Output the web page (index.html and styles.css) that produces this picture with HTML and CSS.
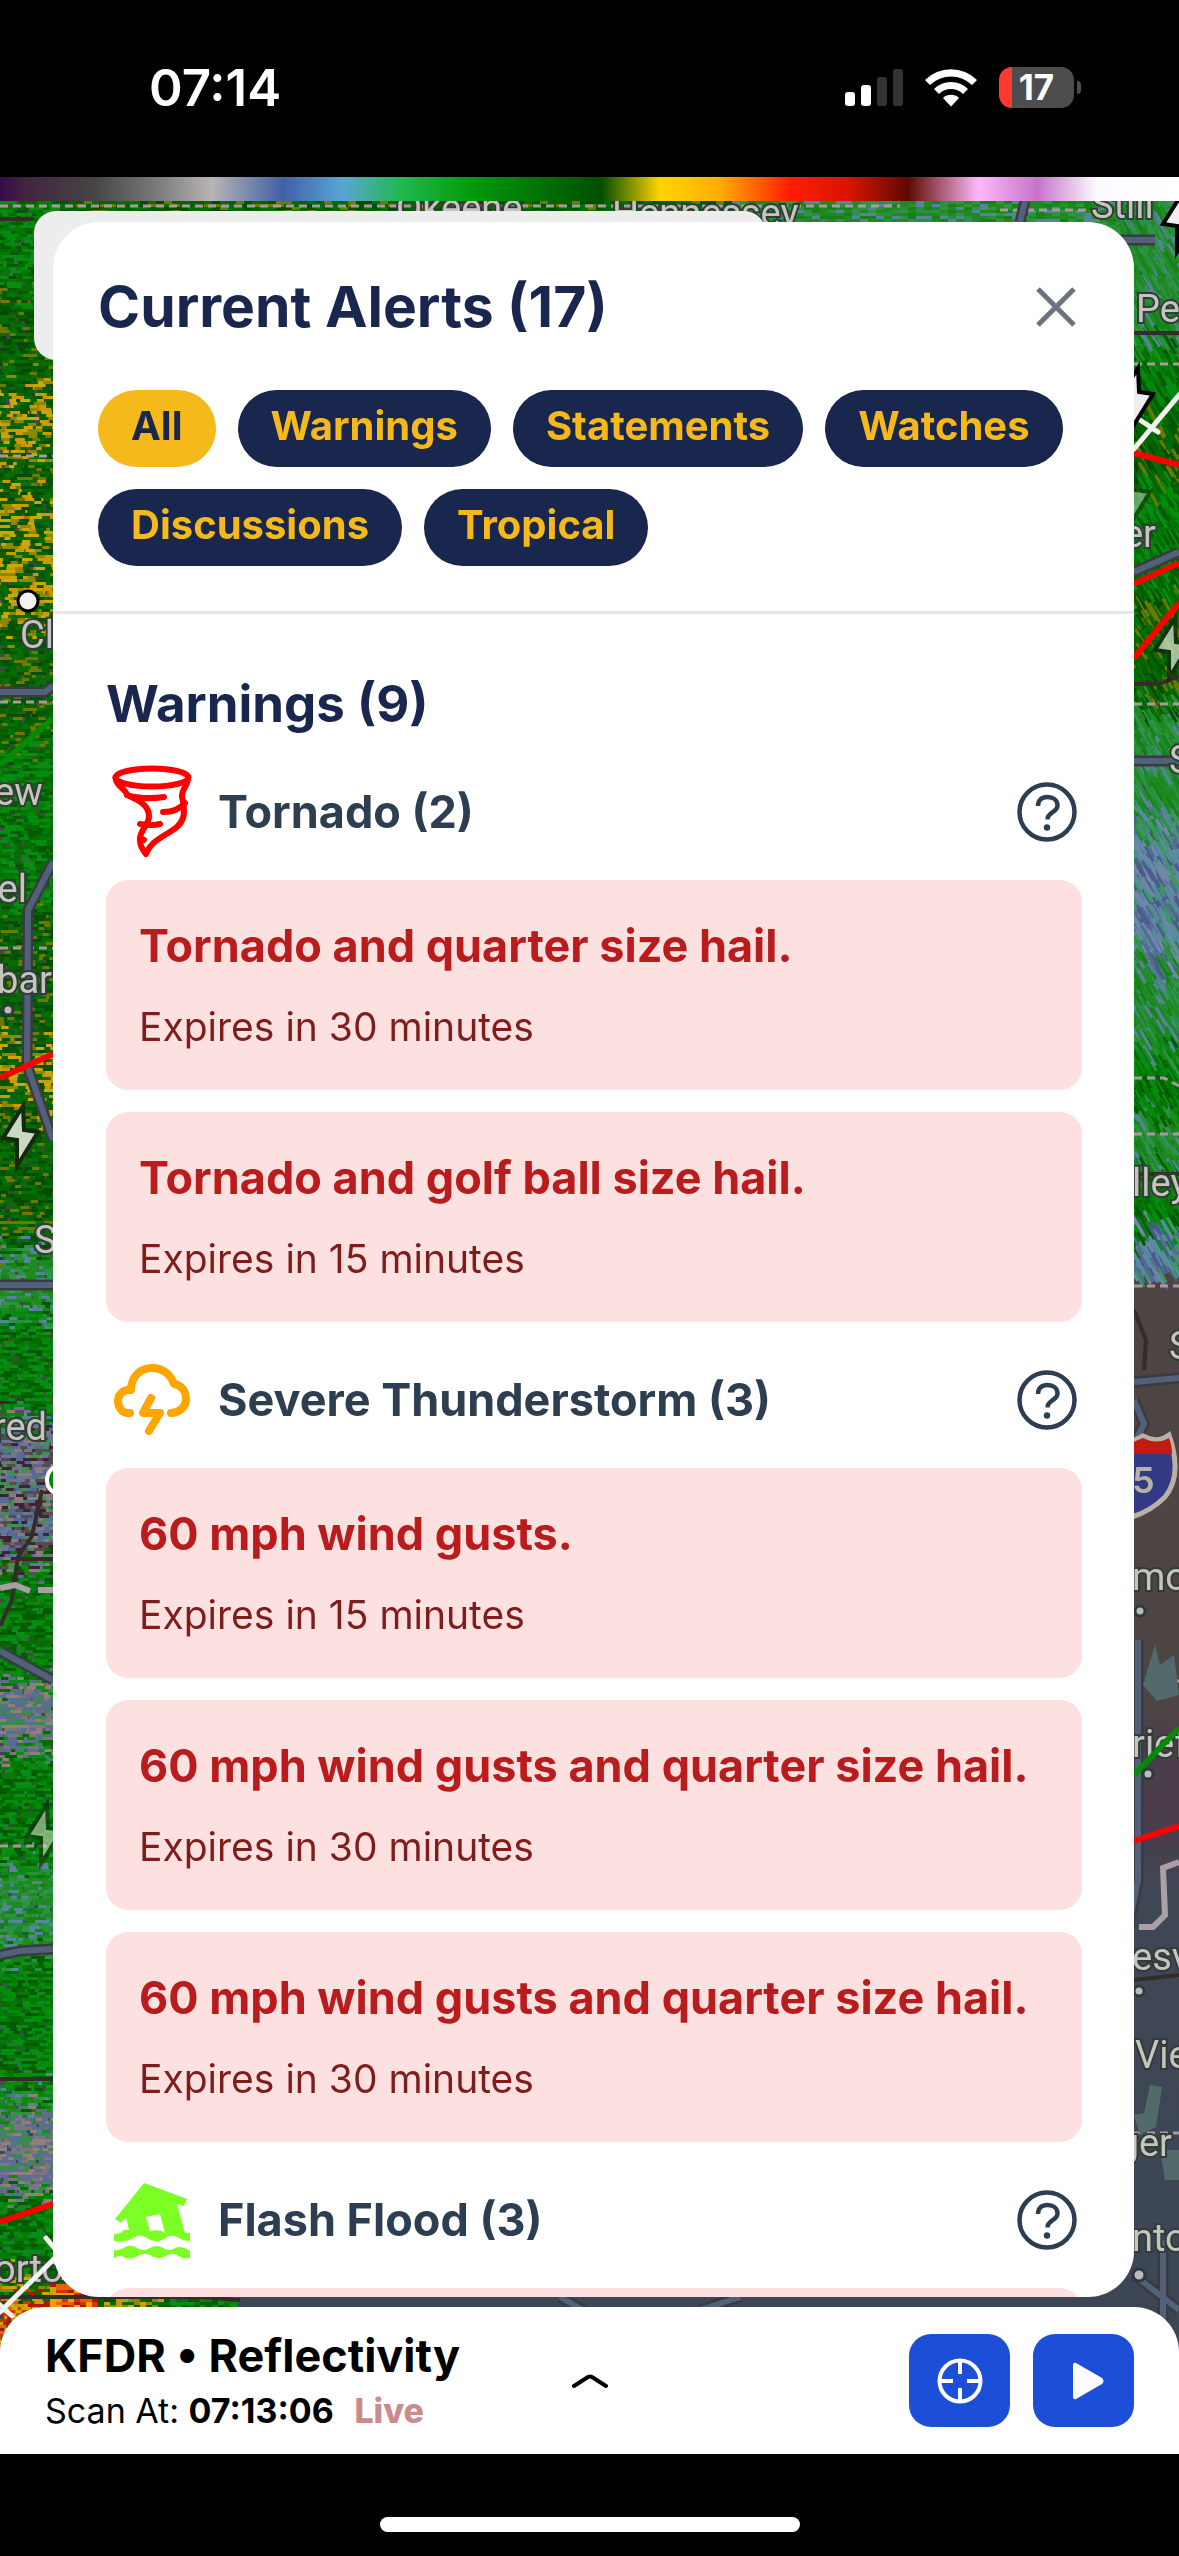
FILE: index.html
```html
<!DOCTYPE html>
<html lang="en">
<head>
  <meta charset="UTF-8" />
  <meta name="viewport" content="width=device-width, initial-scale=1" />
  <title>Current Alerts</title>
  <link rel="stylesheet" href="styles.css">
</head>
<body>
  <!-- shared icons -->
  <svg width="0" height="0" class="sprite" aria-hidden="true">
    <symbol id="help" viewBox="0 0 60 60">
      <circle cx="30" cy="30" r="27.5" fill="none" stroke="currentColor" stroke-width="4.5" />
      <path d="M21 24c0-6 4-9 9.500-9s10 3 10 8.500c0 7-10 6.500-10 14" fill="none" stroke="currentColor" stroke-width="4.500" />
      <circle cx="30" cy="45.500" r="3.200" fill="currentColor" />
    </symbol>
    <symbol id="bolt" viewBox="0 0 40 64" overflow="visible">
      <path d="M23 2 L3 34 L17 36 L17 62 L38 28 L24 26 Z" stroke-width="4" />
    </symbol>
  </svg>

  <header class="status-bar">
    <span class="clock">07:14</span>
    <div class="status-icons">
      <svg width="58" height="38" viewBox="0 0 58 38" aria-label="Signal">
        <rect x="0" y="23" width="10" height="14" rx="3" fill="#fff" />
        <rect x="16" y="16" width="10" height="21" rx="3" fill="#fff" />
        <rect x="32" y="8" width="10" height="29" rx="3" fill="#333" />
        <rect x="48" y="0" width="10" height="37" rx="3" fill="#333" />
      </svg>
      <svg width="52" height="38" viewBox="0 0 52 38" aria-label="Wi-Fi">
        <path d="M0 11a37 37 0 0 1 52 0l-5 5a30 30 0 0 0-42 0z" fill="#fff" />
        <path d="M9 20a24 24 0 0 1 34 0l-5 5a17 17 0 0 0-24 0z" fill="#fff" />
        <path d="M18 29a11.500 11.500 0 0 1 16 0l-8 8.500z" fill="#fff" />
      </svg>
      <div class="battery"><span>17</span></div>
    </div>
  </header>

  <main class="stage">
    <canvas id="radar" class="radar"></canvas>
    <svg class="map" viewBox="0 177 1179 2277" preserveAspectRatio="none" aria-hidden="true">
      <g class="border-line">
        <path d="M0 206H900M1000 210H1100M0 456H53M0 702H53M0 948H53M1134 364H1179M1134 704H1179M0 1846H53M1134 1078h30l15 8M1134 1134H1179M1134 1286H1179M1134 1681H1179M1134 2133H1179" />
      </g>
      <g class="road-edge">
        <path d="M0 692H45L53 686M53 862L28 910L27 1065L53 1140M0 1285H53M0 1651L53 1680M0 1955L20 1951L53 1949M1025 201L1020 222M1134 572L1179 552M1134 761H1179M1120 240H1155M1134 1382L1179 1378M1134 1400L1144 1424L1136 1440M1138 1640V1880L1128 1930M1134 2275L1179 2310M1163 2240V2320M560 2297L600 2320M700 2310L740 2297" />
      </g>
      <g class="road">
        <path d="M0 692H45L53 686M53 862L28 910L27 1065L53 1140M0 1285H53M0 1651L53 1680M0 1955L20 1951L53 1949M1025 201L1020 222M1134 572L1179 552M1134 761H1179M1120 240H1155M1134 1382L1179 1378M1134 1400L1144 1424L1136 1440M1138 1640V1880L1128 1930M1134 2275L1179 2310M1163 2240V2320M560 2297L600 2320M700 2310L740 2297" />
      </g>
      <g fill="none" stroke="#332c2a" stroke-width="4">
        <path d="M0 219H34M1134 333H1179M1134 684h25l20-8M1134 1174H1179M42 1490L32 1536L18 1557L12 1600L0 1626M18 1559H53M1134 1310L1146 1340L1144 1370M1134 1980L1179 1975M0 2079H53M0 2297H200L240 2300" />
      </g>
      <path d="M0 1588L15 1585L30 1591M38 1590H53M1139 1927L1153 1927L1165 1915L1163 1868L1179 1862" class="dash-pale" />
      <path d="M1155 1645l5 20 14-10 5 40-22 6-14-16zM1150 2085l12 2-6 40-16 8-6-20 10-2zM1160 2150h19v30h-14z" fill="#536a6c" />
      <g class="towns-dots">
        <circle cx="8" cy="1010" r="5" /><circle cx="1140" cy="1611" r="5" /><circle cx="1148" cy="1774" r="5" />
        <circle cx="1139" cy="1991" r="5" /><circle cx="1139" cy="2275" r="6" />
      </g>
      <g class="towns">
        <text x="396" y="221">Okeene</text>
        <text x="612" y="226">Hennessey</text>
        <text x="1091" y="218">Still</text>
        <text x="1136" y="322">Pe</text>
        <text x="1156" y="547" text-anchor="end">er</text>
        <text x="1169" y="773">S</text>
        <text x="1132" y="1196">lley</text>
        <text x="1169" y="1359">S</text>
        <text x="1132" y="1590">mo</text>
        <text x="1132" y="1757">rief</text>
        <text x="1132" y="1970">esv</text>
        <text x="1135" y="2068">Vie</text>
        <text x="1172" y="2156" text-anchor="end">ger</text>
        <text x="1132" y="2251">nto</text>
        <text x="20" y="648">Cl</text>
        <text x="-6" y="805">ew C</text>
        <text x="27" y="902" text-anchor="end">el</text>
        <text x="52" y="993" text-anchor="end">bar</text>
        <text x="34" y="1253">S</text>
        <text x="47" y="1440" text-anchor="end">red</text>
        <text x="-6" y="2282">orto</text>
      </g>
      <g class="warn-line">
        <path d="M0 1078L53 1054M0 2222L53 2204M1134 453L1179 465M1134 584L1179 563M1134 658L1179 603M1134 1841L1179 1826" />
        <path d="M0 765L53 718M1134 1775L1179 1728" class="green" />
      </g>
      <path d="M0 2312L55 2258M0 2305L12 2316M46 2238L56 2250M1134 449L1179 395M1140 420L1158 432" class="track" />
      <g fill="#efefef" stroke="#000">
        <use href="#bolt" x="1115" y="366" width="40" height="64" />
        <use href="#bolt" x="1160" y="190" width="40" height="64" />
      </g>
      <g fill="#c9d9c2" stroke="#15280f">
        <use href="#bolt" x="0" y="1104" width="40" height="64" />
        <use href="#bolt" x="1152" y="616" width="40" height="64" opacity="0.8" />
        <use href="#bolt" x="1112" y="464" width="40" height="64" opacity="0.5" />
        <use href="#bolt" x="24" y="1802" width="40" height="64" opacity="0.6" />
      </g>
      <circle cx="28" cy="601" r="10" fill="#f2f2f2" stroke="#000" stroke-width="3" />
      <circle cx="62" cy="1480" r="15" fill="#0a850a" stroke="#fff" stroke-width="4" />
      <!-- interstate shield -->
      <path d="M1110 1446q16 0 33-10q14 8 26-1q14 40-4 62q-14 14-33 20q-22-8-30-30z" fill="#333a84" stroke="#b9b0a6" stroke-width="5" />
      <path d="M1110 1454h62q0-8-3-16q-12 7-26 0q-17 8-33 8z" fill="#c01c10" />
      <text x="1132" y="1493" class="route">5</text>
    </svg>
    <div class="search-box"></div>

    <div class="color-scale"></div>

    <section class="panel">
      <div class="panel-header">
        <div class="title-row">
          <h1>Current Alerts (17)</h1>
          <button class="close" aria-label="Close">
            <svg width="40" height="40" viewBox="0 0 40 40"><path d="M2 2L38 38M38 2L2 38" stroke="#6b7280" stroke-width="5" /></svg>
          </button>
        </div>
        <div class="filters">
          <button class="filter active">All</button>
          <button class="filter">Warnings</button>
          <button class="filter">Statements</button>
          <button class="filter">Watches</button>
          <button class="filter">Discussions</button>
          <button class="filter">Tropical</button>
        </div>
      </div>

      <div class="alerts">
        <h2>Warnings (9)</h2>

        <div class="group">
          <div class="group-header">
            <svg class="group-icon" viewBox="0 0 93 93" fill="none" stroke="#f00" stroke-width="6" stroke-linecap="round" stroke-linejoin="round">
              <ellipse cx="46" cy="12.500" rx="36.500" ry="9" />
              <path d="M9.500 13C10 21 19 23 21 30C30 34 43 39 43 51C43 59 38 61 35 69C32 77 35 83 40 89C48 69 72 69 77 53C80 43 76 35 76 31C76 23 82 21 82 13" />
              <path d="M21 30C30 33 45 34 58 32M57 47C66 47 74 44 79 38M34 59C41 60 46 61 54 59M34 73L38 75" />
            </svg>
            <h3>Tornado (2)</h3>
            <button class="help" aria-label="About tornado warnings"><svg><use href="#help" /></svg></button>
          </div>
          <div class="cards">
            <article class="card"><h4>Tornado and quarter size hail.</h4><p>Expires in 30 minutes</p></article>
            <article class="card"><h4>Tornado and golf ball size hail.</h4><p>Expires in 15 minutes</p></article>
          </div>
        </div>

        <div class="group">
          <div class="group-header">
            <svg class="group-icon" viewBox="0 0 93 93" fill="none" stroke="#ffa500" stroke-width="8" stroke-linecap="round" stroke-linejoin="round">
              <path d="M24 60C17 61 12 55 12 48C12 41 18 36 25 37C25 23 35 15 46 15C57 15 65 22 68 31C76 32 80 39 80 46C80 54 73 60 65 60" />
              <path d="M45 45L37 60H54L43 78" />
            </svg>
            <h3>Severe Thunderstorm (3)</h3>
            <button class="help" aria-label="About severe thunderstorm warnings"><svg><use href="#help" /></svg></button>
          </div>
          <div class="cards">
            <article class="card"><h4>60 mph wind gusts.</h4><p>Expires in 15 minutes</p></article>
            <article class="card"><h4>60 mph wind gusts and quarter size hail.</h4><p>Expires in 30 minutes</p></article>
            <article class="card"><h4>60 mph wind gusts and quarter size hail.</h4><p>Expires in 30 minutes</p></article>
          </div>
        </div>

        <div class="group">
          <div class="group-header">
            <svg class="group-icon" viewBox="0 0 93 93" fill="#7cff24">
              <path d="M38 10L81 26L78 33L71 31L79 60Q84 59 84 61V68Q77 68 73 65Q65 60 58 66Q48 71 41 65Q34 60 27 65Q19 70 8 68V61Q15 61 18 57L23 57L20 44L15 50L9 46ZM40 44L44 58Q54 56 59 60L54 41Z" fill-rule="evenodd" />
              <path d="M8 77Q14 78 19 74Q25 71 31 75Q37 79 44 75Q50 71 57 75Q63 79 69 75Q75 72 84 78V85Q76 86 71 82Q66 79 60 83Q52 88 44 82Q38 79 32 83Q22 88 16 83Q14 82 8 85Z" />
            </svg>
            <h3>Flash Flood (3)</h3>
            <button class="help" aria-label="About flash flood warnings"><svg><use href="#help" /></svg></button>
          </div>
          <div class="cards">
            <article class="card"></article>
          </div>
        </div>
      </div>
    </section>

    <footer class="bottom-bar">
      <div class="product">
        <div class="product-name">KFDR • Reflectivity</div>
        <div class="scan">Scan At: <b>07:13:06</b> <span class="live">Live</span></div>
      </div>
      <button class="expand" aria-label="Expand">
        <svg width="36" height="16" viewBox="0 0 36 16"><path d="M2 13L16 4Q18 3 20 4L34 13" fill="none" stroke="#000" stroke-width="4" stroke-linecap="round" /></svg>
      </button>
      <div class="actions">
        <button class="action" aria-label="Locate">
          <svg width="46" height="46" viewBox="0 0 46 46" fill="none" stroke="#fff" stroke-width="4"><circle cx="23" cy="23" r="20.500" /><path d="M23 2V16M23 30V44M2 23H16M30 23H44" /></svg>
        </button>
        <button class="action" aria-label="Play">
          <svg width="46" height="46" viewBox="0 0 46 46"><path d="M12 7Q12 4 15 5L41 20Q44 23 41 26L15 41Q12 42 12 39Z" fill="#fff" /></svg>
        </button>
      </div>
    </footer>
  </main>

  <div class="home-area"><div class="home-indicator"></div></div>

  <script src="radar.js"></script>
</body>
</html>
```

FILE: styles.css
```css
:root {
  --navy: #19274f;
  --gold: #f5b91b;
  --slate: #2c3e50;
  --blue: #1c4ed8;
  --card-bg: #fde1e1;
  --card-title: #b91c1c;
  --card-text: #7f1d1d;
}

* {
  box-sizing: border-box;
}

body {
  margin: 0;
  height: 100vh;
  display: flex;
  flex-direction: column;
  background: #000;
  font-family: 'Inter', sans-serif;
  overflow: hidden;
}

h1, h2, h3, h4, p {
  margin: 0;
}

button {
  border: none;
  padding: 0;
  background: none;
  font-family: inherit;
  cursor: pointer;
}

svg {
  display: block;
}

.sprite {
  position: absolute;
}

/* Status bar */
.status-bar {
  height: 177px;
  flex: none;
  display: flex;
  align-items: center;
  justify-content: space-between;
  padding: 0 105px 2px 149px;
  color: #fff;
}

.clock {
  font-size: 51px;
  font-weight: 600;
}

.status-icons {
  display: flex;
  align-items: center;
  gap: 22px;
}

.battery {
  position: relative;
  width: 75px;
  height: 41px;
  border-radius: 13px;
  background: linear-gradient(90deg, #ff3b30 13px, #4d4d4d 13px);
  font-size: 35px;
  font-weight: 700;
  line-height: 41px;
  text-align: center;
}

.battery::after {
  content: '';
  position: absolute;
  right: -7px;
  top: 14px;
  width: 4px;
  height: 13px;
  border-radius: 0 4px 4px 0;
  background: #4d4d4d;
}

/* Map */
.stage {
  position: relative;
  flex: 1;
  min-height: 0;
  display: flex;
  flex-direction: column;
  overflow: hidden;
  background: #3b4554;
}

.radar,
.map {
  position: absolute;
  inset: 0;
  width: 100%;
  height: 100%;
}

.border-line {
  fill: none;
  stroke: #a89a9c;
  stroke-width: 3;
  stroke-dasharray: 8 5;
}

.road-edge {
  fill: none;
  stroke: #3a3a40;
  stroke-width: 11;
}

.road {
  fill: none;
  stroke: #52617a;
  stroke-width: 6;
}

.dash-pale {
  fill: none;
  stroke: #a99fa4;
  stroke-width: 6;
}

.warn-line {
  fill: none;
  stroke: #f00;
  stroke-width: 6;
}

.warn-line .green {
  stroke: #058a05;
}

.track {
  stroke: #f2f2f2;
  stroke-width: 5;
  stroke-linecap: round;
}

.towns {
  font-family: Roboto, sans-serif;
  font-size: 38px;
  fill: #c4c6be;
  stroke: #333b38;
  stroke-width: 4;
  paint-order: stroke;
}

.towns-dots {
  fill: #b9bcbc;
  stroke: #30383a;
  stroke-width: 3;
}

.route {
  font-size: 36px;
  font-weight: 600;
  fill: #b9b0a6;
}

.search-box {
  position: absolute;
  top: 34px;
  left: 34px;
  width: 732px;
  height: 149px;
  border-radius: 22px;
  background: #ededed;
}

.color-scale {
  position: relative;
  flex: none;
  height: 24px;
  background: linear-gradient(90deg, #380a4e 0%, #42243f 2%, #454545 8%, #777 13%, #b8b4b4 18%, #4060a5 24%, #5aa5d5 29%, #22b84f 34%, #029a0b 40%, #034e00 51%, #ffd400 56%, #ffae00 61%, #ff1c00 67%, #d91400 72%, #5d0900 77%, #fdb8fa 83%, #c673c9 88%, #fdfaff 93%, #fff 100%);
}

/* Alerts panel */
.panel {
  position: relative;
  flex: 1;
  min-height: 0;
  margin: 21px 45px 10px 53px;
  display: flex;
  flex-direction: column;
  background: #fff;
  border-radius: 46px;
  overflow: hidden;
}

.panel-header {
  flex: none;
  padding: 49px 45px 45px;
  border-bottom: 3px solid #e5e7eb;
}

.title-row {
  display: flex;
  align-items: center;
  justify-content: space-between;
  padding-right: 13px;
  margin-bottom: 47px;
}

h1 {
  font-size: 57px;
  line-height: 72px;
  font-weight: 700;
  color: var(--navy);
}

.filters {
  display: flex;
  flex-wrap: wrap;
  gap: 22px;
}

.filter {
  height: 77px;
  padding: 0 33px 5px;
  border-radius: 39px;
  background: var(--navy);
  color: var(--gold);
  font-size: 40px;
  font-weight: 700;
  line-height: 72px;
}

.filter.active {
  background: var(--gold);
  color: var(--navy);
}

.alerts {
  flex: 1;
  min-height: 0;
  overflow: hidden;
  display: flex;
  flex-direction: column;
  gap: 31px;
  padding: 60px 52px 0 53px;
}

h2 {
  font-size: 51px;
  line-height: 60px;
  font-weight: 700;
  color: var(--navy);
}

.group-header {
  display: flex;
  align-items: center;
  gap: 19px;
  height: 93px;
  margin-bottom: 22px;
  padding-right: 5px;
}

.group-icon {
  width: 93px;
  height: 93px;
  flex: none;
}

h3 {
  flex: 1;
  font-size: 45px;
  font-weight: 700;
  color: var(--slate);
}

.help svg {
  width: 60px;
  height: 60px;
  color: var(--slate);
}

.cards {
  display: flex;
  flex-direction: column;
  gap: 22px;
}

.card {
  display: flex;
  flex-direction: column;
  gap: 24px;
  min-height: 210px;
  padding: 36px 33px;
  border-radius: 22px;
  background: var(--card-bg);
}

.card h4 {
  font-size: 45px;
  line-height: 60px;
  font-weight: 700;
  color: var(--card-title);
}

.card p {
  font-size: 39px;
  line-height: 54px;
  color: var(--card-text);
}

/* Bottom bar */
.bottom-bar {
  position: relative;
  flex: none;
  height: 147px;
  display: grid;
  grid-template-columns: 1fr auto 1fr;
  align-items: center;
  padding: 0 45px;
  background: #fff;
  border-radius: 45px 45px 0 0;
}

.product {
  white-space: nowrap;
}

.product-name {
  font-size: 45px;
  line-height: 60px;
  font-weight: 700;
}

.scan {
  font-size: 34px;
  line-height: 50px;
}

.live {
  margin-left: 11px;
  font-weight: 800;
  color: #cc8a8a;
}

.actions {
  display: flex;
  justify-content: flex-end;
  gap: 23px;
}

.action {
  width: 101px;
  height: 93px;
  display: flex;
  align-items: center;
  justify-content: center;
  border-radius: 22px;
  background: var(--blue);
}

.home-area {
  flex: none;
  height: 102px;
  display: flex;
  align-items: flex-end;
  justify-content: center;
  padding-bottom: 24px;
}

.home-indicator {
  width: 420px;
  height: 15px;
  border-radius: 8px;
  background: #fff;
}
```

FILE: radar.js
```js
// Draws the reflectivity layer behind the panel
const canvas = document.getElementById('radar');
const ctx = canvas.getContext('2d');
canvas.width = canvas.clientWidth;
canvas.height = canvas.clientHeight;

const W = canvas.width;
const H = canvas.height;

// seeded so the layer is the same on every load
let seed = 17;
function rand() {
  seed = (seed * 1664525 + 1013904223) % 4294967296;
  return seed / 4294967296;
}

const GREEN = ['#027a06', '#028c0a', '#026c02', '#0a8a18', '#035a03'];
const YELLOW = ['#c9a800', '#8a8a00', '#026002', '#035203', '#d09800', '#046a04'];
const OLIVE = ['#026002', '#035203', '#0a6a08', '#6f7800', '#027006', '#024c02', '#046404'];
const MIXED = ['#2a9040', '#1f8a22', '#56849a', '#2f9448', '#178018', '#1c8a20'];
const GREY = ['#8a7c80', '#566a98', '#5a4a50', '#3f9050', '#6a7494', '#3a2434'];
const SLATE = ['#7d7480', '#5f6c90', '#8f8078', '#56708c', '#3a8a4c'];
const STORM = ['#d83000', '#e86000', '#c9a800', '#b01800', '#f0a000'];
const BLUE = ['#566a98', '#5a8aa4', '#4a5c8c', '#3a9a60', '#6f88a8'];

// [bottom of the band as a share of the height, colours]
const left = [
  [0.05, GREEN], [0.09, OLIVE], [0.12, YELLOW], [0.14, OLIVE], [0.2, YELLOW],
  [0.25, OLIVE], [0.32, GREEN], [0.38, OLIVE], [0.41, YELLOW], [0.47, OLIVE],
  [0.5, MIXED], [0.545, GREEN], [0.61, GREY], [0.66, GREEN], [0.69, SLATE],
  [0.74, GREEN], [0.78, MIXED], [0.84, GREEN], [0.85, MIXED], [0.885, SLATE],
  [0.92, GREEN], [0.93, YELLOW], [1, STORM]
];
const right = [
  [0.02, MIXED], [0.07, MIXED], [0.1, GREEN], [0.13, OLIVE], [0.18, GREEN],
  [0.23, OLIVE], [0.28, MIXED], [0.34, BLUE], [0.38, MIXED], [0.41, GREEN],
  [0.43, MIXED], [0.46, GREEN], [0.475, BLUE]
];

function pick(bands, y) {
  const band = bands.find(b => y / H < b[0] + (rand() - 0.5) * 0.02);
  return band ? band[1][Math.floor(rand() * band[1].length)] : null;
}

// dry ground on the right
const ground = ctx.createLinearGradient(0, 0, 0, H);
ground.addColorStop(0, '#4c4543');
ground.addColorStop(0.67, '#4c4543');
ground.addColorStop(0.69, '#4d3d4c');
ground.addColorStop(0.73, '#4a3d4c');
ground.addColorStop(0.75, '#3f4754');
ground.addColorStop(1, '#3b4554');
ctx.fillStyle = ground;
ctx.fillRect(0, 0, W, H);

for (let y = 0; y < H; y += 3) {
  for (let x = -8; x < 70; x += 7) {
    const color = pick(left, y);
    if (color) {
      ctx.fillStyle = color;
      ctx.fillRect(x + rand() * 6, y, 6 + rand() * 10, 3);
    }
  }
}

// strip above the panel
for (let y = 0; y < 60; y += 3) {
  for (let x = 60; x < W; x += 8) {
    const set = x < W * 0.62 ? OLIVE : MIXED;
    ctx.fillStyle = set[Math.floor(rand() * set.length)];
    ctx.fillRect(x, y, 14, 3);
  }
}

// radial streaks on the right edge
for (let i = 0; i < 9000; i++) {
  const x = W - 60 + rand() * 64;
  const y = rand() * H * 0.48;
  const color = pick(right, y);
  if (!color) continue;
  ctx.save();
  ctx.translate(x, y);
  ctx.rotate(1.05);
  ctx.fillStyle = color;
  ctx.fillRect(0, 0, 10 + rand() * 14, 3);
  ctx.restore();
}

// strip between the panel and the bottom bar
for (let x = 50; x < W * 0.2; x += 6) {
  for (let y = H - 170; y < H - 140; y += 3) {
    const set = x < W * 0.08 ? STORM : x < W * 0.14 ? YELLOW : GREEN;
    ctx.fillStyle = set[Math.floor(rand() * set.length)];
    ctx.fillRect(x, y, 8, 3);
  }
}
```
